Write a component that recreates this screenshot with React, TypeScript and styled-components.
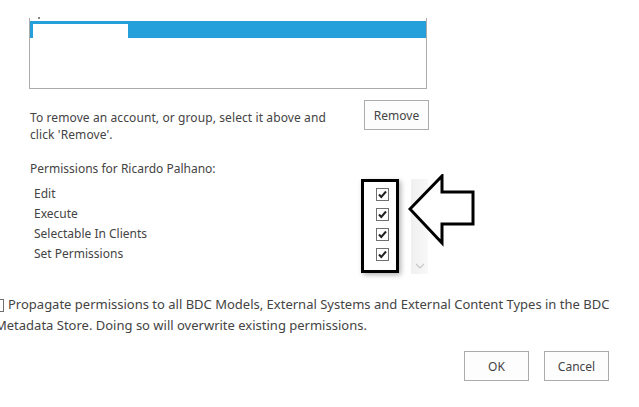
import React from 'react'
import styled, {createGlobalStyle} from 'styled-components'

const GlobalStyle = createGlobalStyle`
    html, body {
        margin: 0;
        padding: 0;
        background: #FFFFFF;
    }
    body {
        font-family: 'Noto Sans', 'Open Sans', sans-serif;
        font-size: 12px;
        color: #444444;
        width: 639px;
        height: 407px;
        overflow: hidden;
    }
`;

const permissions = ['Edit', 'Execute', 'Selectable In Clients', 'Set Permissions'];

const CheckMark = ()=>(
    <svg width="11" height="11" viewBox="0 0 11 11">
        <path d="M2 5.5 L4.3 8 L9 2.5" fill="none" stroke="#222" strokeWidth="2"/>
    </svg>
)

const Chevron = ({up}: {up?: boolean})=>(
    <svg width="10" height="6" viewBox="0 0 10 6">
        <path d={up ? "M1 5 L5 1 L9 5" : "M1 1 L5 5 L9 1"} fill="none" stroke="#c8c8c8" strokeWidth="1.2"/>
    </svg>
)

const App = ()=>{
  return (
    <>
        <GlobalStyle/>
        <Page>
            <ListBox>
                <Dot/>
                <SelectedRow>
                    <HiddenName/>
                </SelectedRow>
            </ListBox>

            <RemoveRow>
                <RemoveText>To remove an account, or group, select it above and click 'Remove'.</RemoveText>
                <Button>Remove</Button>
            </RemoveRow>

            <SectionTitle>Permissions for Ricardo Palhano:</SectionTitle>

            <PermissionPanel>
                <PermissionList>
                    {permissions.map((p)=>(
                        <PermissionRow key={p}>
                            <PermissionLabel>{p}</PermissionLabel>
                            <CheckBox><CheckMark/></CheckBox>
                        </PermissionRow>
                    ))}
                </PermissionList>
                <ScrollTrack>
                    <Chevron up/>
                    <Chevron/>
                </ScrollTrack>
                <Highlight/>
                <Arrow width="70" height="74" viewBox="0 0 70 74">
                    <polygon points="2,35 34,2 34,18 65,18 65,50 34,50 34,69" fill="#fff" stroke="#000" strokeWidth="3" strokeLinejoin="miter"/>
                </Arrow>
            </PermissionPanel>

            <PropagateRow>
                <EmptyBox/>
                <PropagateText>Propagate permissions to all BDC Models, External Systems and External Content Types in the BDC Metadata Store. Doing so will overwrite existing permissions.</PropagateText>
            </PropagateRow>

            <Footer>
                <Button>OK</Button>
                <Button>Cancel</Button>
            </Footer>
        </Page>
    </>
  )
}

let Page : any = styled.div`
    padding-left: 29px;
    padding-top: 18px;
    width: 610px;
`;
let ListBox : any = styled.div`
    position: relative;
    width: 398px;
    height: 71px;
    border: 1px solid #ababab;
    border-top: none;
    padding-top: 3px;
    box-sizing: border-box;
`;
let Dot : any = styled.div`
    position: absolute;
    left: 8px;
    top: -1px;
    width: 2px;
    height: 2px;
    background: #888;
`;
let SelectedRow : any = styled.div`
    height: 17px;
    background: #26a0da;
    display: flex;
    align-items: flex-end;
    padding-left: 3px;
`;
let HiddenName : any = styled.div`
    width: 95px;
    height: 14px;
    background: #FFFFFF;
`;
let RemoveRow : any = styled.div`
    display: flex;
    justify-content: space-between;
    align-items: flex-start;
    margin-top: 11px;
    width: 400px;
`;
let RemoveText : any = styled.div`
    width: 310px;
    margin-left: 1px;
    margin-top: 9px;
    line-height: 17px;
    letter-spacing: 0.1px;
`;
let Button : any = styled.div`
    width: 65px;
    height: 30px;
    box-sizing: border-box;
    border: 1px solid #ababab;
    background: #fdfdfd;
    display: flex;
    align-items: center;
    justify-content: center;
    font-size: 12px;
    color: #444;
`;
let SectionTitle : any = styled.div`
    margin-top: 17px;
    margin-left: 1px;
    line-height: 17px;
`;
let PermissionPanel : any = styled.div`
    position: relative;
    display: flex;
    margin-top: 2px;
    height: 95px;
`;
let PermissionList : any = styled.div`
    padding-top: 5px;
    width: 353px;
`;
let PermissionRow : any = styled.div`
    display: flex;
    justify-content: space-between;
    align-items: center;
    height: 20px;
    padding-left: 5px;
    width: 355px;
`;
let PermissionLabel : any = styled.div`
    line-height: 20px;
`;
let CheckBox : any = styled.div`
    width: 13px;
    height: 13px;
    box-sizing: border-box;
    border: 1px solid #707070;
    background: #fff;
    display: flex;
    align-items: center;
    justify-content: center;
`;
let ScrollTrack : any = styled.div`
    margin-left: 29px;
    width: 17px;
    background: linear-gradient(90deg, #f0f0f0, #f8f8f8);
    display: flex;
    flex-direction: column;
    justify-content: space-between;
    align-items: center;
    padding: 20px 0 5px 0;
    box-sizing: border-box;
`;
let Highlight : any = styled.div`
    position: absolute;
    left: 332px;
    top: 0px;
    width: 38px;
    height: 94px;
    box-sizing: border-box;
    border: 3px solid #000;
    box-shadow: 2px 2px 5px rgba(0,0,0,0.3);
`;
let Arrow : any = styled.svg`
    position: absolute;
    left: 379px;
    top: -5px;
`;
let PropagateRow : any = styled.div`
    display: flex;
    align-items: flex-start;
    margin-left: -38px;
    margin-top: 24px;
    width: 640px;
`;
let EmptyBox : any = styled.div`
    flex: none;
    width: 13px;
    height: 13px;
    box-sizing: border-box;
    border: 1px solid #707070;
    margin-top: 1px;
    margin-right: 4px;
`;
let PropagateText : any = styled.div`
    font-size: 13px;
    line-height: 21px;
    margin-top: -4px;
    margin-left: -13px;
    text-indent: 13px;
`;
let Footer : any = styled.div`
    display: flex;
    justify-content: flex-end;
    gap: 15px;
    margin-top: 15px;
    width: 580px;
`;

export default App
